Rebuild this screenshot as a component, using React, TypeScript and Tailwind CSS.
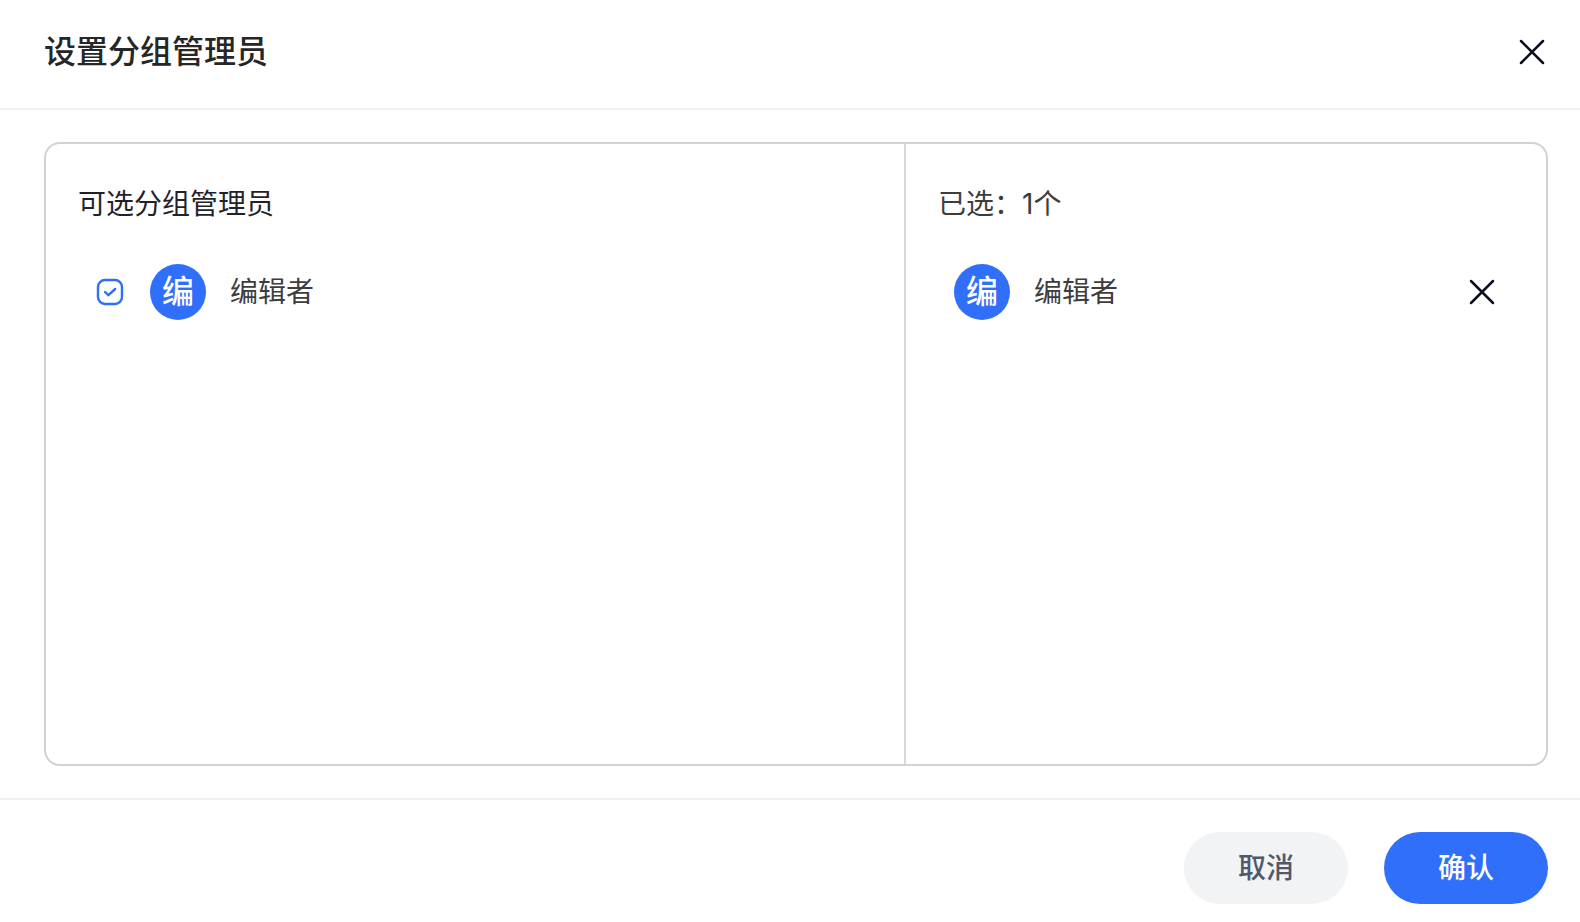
import { useState } from "react";

type Member = { id: string; name: string };

const members: Member[] = [{ id: "editor", name: "编辑者" }];

function CloseIcon() {
  return (
    <svg viewBox="0 0 32 32" className="size-8" fill="none" aria-hidden="true">
      <path
        d="M5 5L27 27M27 5L5 27"
        stroke="#0c1020"
        strokeWidth="2.5"
        strokeLinecap="round"
      />
    </svg>
  );
}

function Avatar({ name }: { name: string }) {
  return (
    <span
      aria-hidden="true"
      className="flex size-14 shrink-0 items-center justify-center rounded-full bg-[#2f6ff9] text-[32px] leading-none font-medium text-white"
    >
      {name.charAt(0)}
    </span>
  );
}

export default function App() {
  const [selected, setSelected] = useState<string[]>(["editor"]);

  const toggle = (id: string) =>
    setSelected((ids) =>
      ids.includes(id) ? ids.filter((other) => other !== id) : [...ids, id],
    );

  const chosen = members.filter((member) => selected.includes(member.id));

  return (
    <div
      role="dialog"
      aria-labelledby="dialog-title"
      className="flex min-h-screen flex-col bg-white font-['Inter','Noto_Sans_CJK_SC',sans-serif] text-[28px] leading-10 text-[#3d3d3d]"
    >
      <header className="flex items-center justify-between border-b-2 border-[#f0f0f1] pt-7 pr-8 pb-8 pl-11">
        <h1 id="dialog-title" className="text-[32px] leading-12 font-medium text-[#262626]">
          设置分组管理员
        </h1>
        <button type="button" aria-label="关闭">
          <CloseIcon />
        </button>
      </header>

      <main className="flex grow flex-col py-8 pr-8 pl-11">
        <div className="grid grow grid-cols-[43fr_32fr] rounded-2xl border-2 border-[#d1d1d6]">
          <section className="flex flex-col gap-10 border-r-2 border-[#d8d8da] px-8 py-10">
            <h2 className="text-[#1f2329]">可选分组管理员</h2>
            <ul className="px-4">
              {members.map((member) => (
                <li key={member.id}>
                  <label className="flex cursor-pointer items-center gap-6">
                    <span className="grid size-8 place-items-center">
                      <input
                        type="checkbox"
                        checked={selected.includes(member.id)}
                        onChange={() => toggle(member.id)}
                        className="peer col-start-1 row-start-1 size-7 appearance-none"
                      />
                      <svg
                        viewBox="0 0 28 28"
                        fill="none"
                        stroke="#2f6ff9"
                        strokeWidth="2.4"
                        strokeLinecap="round"
                        strokeLinejoin="round"
                        aria-hidden="true"
                        className="pointer-events-none col-start-1 row-start-1 size-7 [&>path]:invisible peer-checked:[&>path]:visible"
                      >
                        <rect x="2" y="2" width="24" height="24" rx="7" />
                        <path d="M9 14L12.4 17.2L19.2 11" />
                      </svg>
                    </span>
                    <Avatar name={member.name} />
                    <span>{member.name}</span>
                  </label>
                </li>
              ))}
            </ul>
          </section>

          <section className="flex flex-col gap-10 px-8 py-10">
            <h2>已选：{chosen.length}个</h2>
            <ul className="px-4">
              {chosen.map((member) => (
                <li key={member.id} className="flex items-center gap-6">
                  <Avatar name={member.name} />
                  <span className="grow">{member.name}</span>
                  <button
                    type="button"
                    aria-label={`移除${member.name}`}
                    onClick={() => toggle(member.id)}
                  >
                    <CloseIcon />
                  </button>
                </li>
              ))}
            </ul>
          </section>
        </div>
      </main>

      <footer className="flex justify-end gap-9 border-t-2 border-[#f0f0f1] pt-8 pr-8 pb-[18px]">
        <button
          type="button"
          className="h-18 w-41 rounded-full bg-[#f2f3f5] font-medium text-[#4e5969]"
        >
          取消
        </button>
        <button
          type="button"
          className="h-18 w-41 rounded-full bg-[#2f6ff9] font-medium text-white"
        >
          确认
        </button>
      </footer>
    </div>
  );
}
